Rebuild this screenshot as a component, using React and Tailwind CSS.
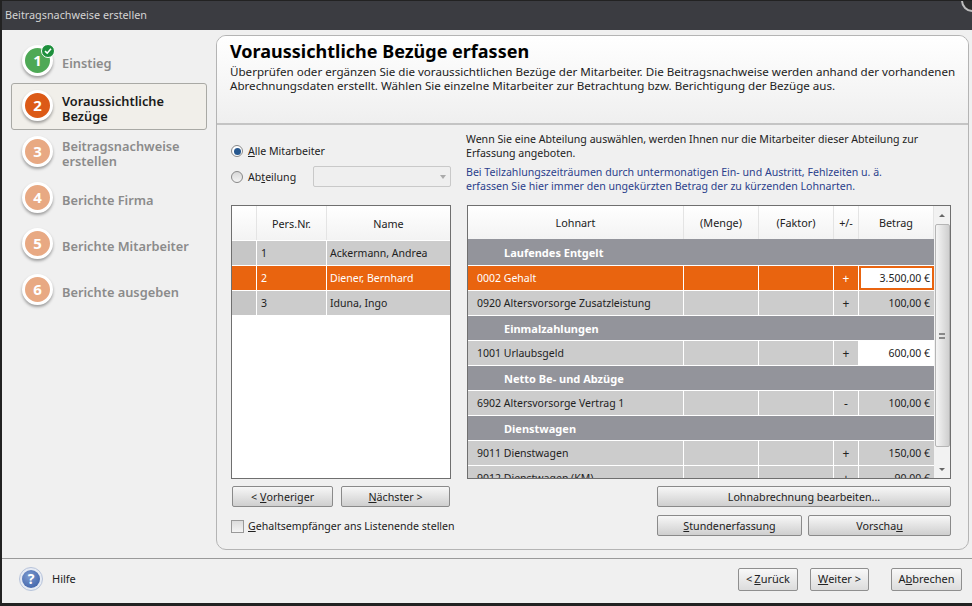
import React from 'react';

const font = "font-['Noto_Sans','DejaVu_Sans',sans-serif]";

const steps = [
  { n: 1, label: ['Einstieg'], done: true },
  { n: 2, label: ['Voraussichtliche', 'Bezüge'], active: true },
  { n: 3, label: ['Beitragsnachweise', 'erstellen'] },
  { n: 4, label: ['Berichte Firma'] },
  { n: 5, label: ['Berichte Mitarbeiter'] },
  { n: 6, label: ['Berichte ausgeben'] },
];

const people = [
  { nr: '1', name: 'Ackermann, Andrea' },
  { nr: '2', name: 'Diener, Bernhard', selected: true },
  { nr: '3', name: 'Iduna, Ingo' },
];

const rows = [
  { section: 'Laufendes Entgelt', tall: true },
  { name: '0002 Gehalt', sign: '+', value: '3.500,00 €', selected: true },
  { name: '0920 Altersvorsorge Zusatzleistung', sign: '+', value: '100,00 €' },
  { section: 'Einmalzahlungen' },
  { name: '1001 Urlaubsgeld', sign: '+', value: '600,00 €', white: true },
  { section: 'Netto Be- und Abzüge' },
  { name: '6902 Altersvorsorge Vertrag 1', sign: '-', value: '100,00 €' },
  { section: 'Dienstwagen' },
  { name: '9011 Dienstwagen', sign: '+', value: '150,00 €' },
  { name: '9012 Dienstwagen (KM)', sign: '+', value: '90,00 €' },
];

function StepCircle({ step }) {
  let color = 'bg-[#e8a983]';
  if (step.done) color = 'bg-[#4ea956]';
  if (step.active) color = 'bg-[#dc5a17]';
  return (
    <div className={`relative shrink-0 w-[31px] h-[31px] rounded-full border-[3px] border-white shadow-[0_2px_3px_rgba(0,0,0,0.35)] flex items-center justify-center text-white text-[15px] font-bold ${color}`}>
      {step.n}
      {step.done && (
        <span className="absolute -top-[4px] -right-[5px] w-[14px] h-[14px] rounded-full bg-[#1d8f3c] border border-white flex items-center justify-center">
          <svg width="8" height="8" viewBox="0 0 8 8" fill="none">
            <path d="M1 4.2 3.2 6.2 7 1.8" stroke="white" strokeWidth="1.6" />
          </svg>
        </span>
      )}
    </div>
  );
}

function Step({ step }) {
  return (
    <div className={`flex items-center gap-[9px] pl-[10px] rounded-[3px] ${step.active ? 'bg-[#f1efea] border border-[#a9a9a5] -my-px h-[47px]' : 'h-[46px] border border-transparent'}`}>
      <div className="-mt-[2px]"><StepCircle step={step} /></div>
      <div className={`mt-[4px] text-[12.8px] leading-[15px] font-semibold ${step.active ? 'text-[#1a1a1a]' : 'text-[#8b8b8b]'}`}>
        {step.label.map((l) => <div key={l}>{l}</div>)}
      </div>
    </div>
  );
}

function Btn({ className, children }) {
  return (
    <button className={`h-[21px] pt-[1px] rounded-[2px] border border-[#8a8a8a] bg-gradient-to-b from-[#f7f7f7] to-[#cfcfcf] text-[10.7px] text-[#222] flex items-center justify-center ${className}`}>
      {children}
    </button>
  );
}

function FooterBtn({ className, children }) {
  return (
    <button className={`h-[23px] rounded-[2px] border border-[#8f8f8f] bg-gradient-to-b from-[#f8f8f8] to-[#dcdcdc] text-[11px] text-[#222] flex items-center justify-center ${className}`}>
      {children}
    </button>
  );
}

function HeadCell({ className, children }) {
  return (
    <div className={`h-full pt-[2px] flex items-center justify-center border-r border-[#e4e4e4] text-[10.8px] text-[#222] ${className}`}>
      {children}
    </div>
  );
}

function WageRow({ row }) {
  if (row.section) {
    return (
      <div className={`shrink-0 pt-[2px] bg-[#93949b] border-b border-white flex items-center pl-[36px] text-[11px] font-bold text-white ${row.tall ? 'h-[27px]' : 'h-[25px]'}`}>
        {row.section}
      </div>
    );
  }
  const bg = row.selected ? 'bg-[#e9640f] text-white' : 'bg-[#cccccc] text-[#222]';
  return (
    <div className={`h-[25px] shrink-0 flex border-b border-white text-[10.5px] ${bg}`}>
      <div className="w-[216px] pt-[2px] flex items-center pl-[9px] border-r border-white">{row.name}</div>
      <div className="w-[75px] border-r border-white" />
      <div className="w-[75px] border-r border-white" />
      <div className="w-[25px] pt-[2px] flex items-center justify-center border-r border-white text-[12px]">{row.sign}</div>
      {row.selected ? (
        <div className="w-[75px] p-[2px] bg-[#e9640f]">
          <div className="h-full pt-[2px] bg-white text-[#222] flex items-center justify-end pr-[2px]">{row.value}</div>
        </div>
      ) : (
        <div className={`w-[75px] pt-[2px] flex items-center justify-end pr-[4px] ${row.white ? 'bg-white' : ''}`}>{row.value}</div>
      )}
    </div>
  );
}

function Scrollbar() {
  return (
    <div className="w-[16px] shrink-0 bg-[#f2f2f2] flex flex-col items-center">
      <div className="h-[18px] flex items-center justify-center">
        <div className="w-0 h-0 border-x-[3px] border-x-transparent border-b-[3px] border-b-[#666]" />
      </div>
      <div className="h-[223px] w-[15px] rounded-[2px] border border-[#b5b5b5] bg-gradient-to-r from-[#f5f5f5] to-[#cfcfcf] flex items-center justify-center">
        <div className="w-[6px] h-[6px] border-y-2 border-[#888] relative" />
      </div>
      <div className="pt-[21px] flex justify-center">
        <div className="w-0 h-0 border-x-[3px] border-x-transparent border-t-[3px] border-t-[#666]" />
      </div>
    </div>
  );
}

export default function App() {
  return (
    <div className={`w-[972px] h-[606px] flex flex-col overflow-hidden bg-[#f0f0f0] border-l-2 border-b-[3px] border-[#222] ${font}`}>
      <div className="relative -ml-[2px] h-[30px] shrink-0 bg-[#3b3c41] border-t border-[#222] flex items-center pl-[5px] text-[10.8px] text-[#d4d4d4] overflow-hidden">
        Beitragsnachweise erstellen
        <div className="absolute -top-[12px] -right-[12px] w-[23px] h-[23px] rounded-full border-2 border-[#bdbdbd] bg-[#2c2c2c]" />
      </div>

      <div className="flex-1 flex min-h-0 pt-[5px]">
        <div className="w-[214px] shrink-0 pt-[3px] pl-[9px] pr-[9px]">
          {steps.map((s) => <Step key={s.n} step={s} />)}
        </div>

        <div className="w-[753px] h-[515px] rounded-[10px] border border-[#b4b4b4] flex flex-col overflow-hidden">
          <div className="h-[89px] shrink-0 bg-gradient-to-b from-white to-[#efefef] border-b-2 border-[#c4c4c4] pl-[13px] pt-[4px]">
            <h1 className="text-[18px] leading-[22px] font-bold text-black">Voraussichtliche Bezüge erfassen</h1>
            <p className="mt-[3px] text-[11.6px] leading-[14px] text-[#222] whitespace-nowrap">
              Überprüfen oder ergänzen Sie die voraussichtlichen Bezüge der Mitarbeiter. Die Beitragsnachweise werden anhand der vorhandenen<br />
              Abrechnungsdaten erstellt. Wählen Sie einzelne Mitarbeiter zur Betrachtung bzw. Berichtigung der Bezüge aus.
            </p>
          </div>

          <div className="flex-1 flex pl-[14px] pt-[7px]">
            <div className="w-[220px] shrink-0 flex flex-col">
              <div className="h-[73px] text-[10.6px] text-[#222]">
                <div className="mt-[11px] h-[16px] flex items-center gap-[5px]">
                  <span className="w-[12px] h-[12px] rounded-full border border-[#888] bg-white flex items-center justify-center">
                    <span className="w-[7px] h-[7px] rounded-full bg-[#27588f]" />
                  </span>
                  <span className="pt-[2px]"><u>A</u>lle Mitarbeiter</span>
                </div>
                <div className="mt-[7px] flex items-center">
                  <span className="w-[12px] h-[12px] rounded-full border border-[#888] bg-gradient-to-b from-[#d8d8d8] to-[#f4f4f4] mr-[5px]" />
                  <span className="w-[65px] pt-[2px]">Ab<u>t</u>eilung</span>
                  <div className="w-[138px] h-[21px] rounded-[2px] border border-[#c9c9c9] bg-[#efefef] flex items-center justify-end pr-[4px]">
                    <div className="w-0 h-0 border-x-[3px] border-x-transparent border-t-[4px] border-t-[#aaa]" />
                  </div>
                </div>
              </div>

              <div className="h-[274px] border border-[#6f6f6f] bg-white flex flex-col">
                <div className="h-[35px] flex bg-gradient-to-b from-white to-[#f3f3f3] border-b border-white">
                  <HeadCell className="w-[25px]" />
                  <HeadCell className="w-[70px]">Pers.Nr.</HeadCell>
                  <HeadCell className="flex-1 border-r-0">Name</HeadCell>
                </div>
                {people.map((p) => (
                  <div key={p.nr} className={`h-[25px] flex border-b border-white text-[10.5px] ${p.selected ? 'bg-[#e9640f] text-white' : 'bg-[#cccccc] text-[#222]'}`}>
                    <div className={`w-[25px] border-r border-white ${p.selected ? '' : 'bg-[#c6c6c6]'}`} />
                    <div className="w-[70px] pt-[2px] flex items-center pl-[4px] border-r border-white">{p.nr}</div>
                    <div className="flex-1 pt-[2px] flex items-center pl-[3px]">{p.name}</div>
                  </div>
                ))}
              </div>

              <div className="mt-[7px] flex gap-[8px] pl-px">
                <Btn className="w-[101px]">&lt; <u className="ml-[3px]">V</u>orheriger</Btn>
                <Btn className="w-[109px]"><u>N</u>ächster &gt;</Btn>
              </div>
              <div className="mt-[12px] flex items-center gap-[4px] text-[10.6px] text-[#222] whitespace-nowrap">
                <span className="shrink-0 w-[13px] h-[13px] border border-[#999] bg-gradient-to-b from-[#dcdcdc] to-[#f4f4f4]" />
                <span><u>G</u>ehaltsempfänger ans Listenende stellen</span>
              </div>
            </div>

            <div className="w-[484px] ml-[16px] flex flex-col">
              <div className="h-[73px] -ml-[1px] text-[10.6px] leading-[14px] whitespace-nowrap">
                <p className="text-[#222]">Wenn Sie eine Abteilung auswählen, werden Ihnen nur die Mitarbeiter dieser Abteilung zur<br />Erfassung angeboten.</p>
                <p className="mt-[5px] text-[#2b3f8c]">Bei Teilzahlungszeiträumen durch untermonatigen Ein- und Austritt, Fehlzeiten u. ä.<br />erfassen Sie hier immer den ungekürzten Betrag der zu kürzenden Lohnarten.</p>
              </div>

              <div className="h-[274px] border border-[#6f6f6f] flex bg-white">
                <div className="w-[466px] flex flex-col overflow-hidden">
                  <div className="h-[33px] shrink-0 flex bg-gradient-to-b from-white to-[#f3f3f3]">
                    <HeadCell className="w-[216px]">Lohnart</HeadCell>
                    <HeadCell className="w-[75px]">(Menge)</HeadCell>
                    <HeadCell className="w-[75px]">(Faktor)</HeadCell>
                    <HeadCell className="w-[25px]">+/-</HeadCell>
                    <HeadCell className="w-[75px]">Betrag</HeadCell>
                  </div>
                  {rows.map((r, i) => <WageRow key={i} row={r} />)}
                </div>
                <Scrollbar />
              </div>

              <div className="mt-[7px] flex justify-end">
                <Btn className="w-[294px]">Lohnabrechnung bearbeiten...</Btn>
              </div>
              <div className="mt-[8px] flex justify-end gap-[6px]">
                <Btn className="w-[145px]"><u>S</u>tundenerfassung</Btn>
                <Btn className="w-[143px]">Vorscha<u>u</u></Btn>
              </div>
            </div>
          </div>
        </div>
      </div>

      <div className="h-[45px] shrink-0 border-t border-[#9a9a9a] flex items-center pl-[17px] pr-[10px] pb-[4px] text-[11px] text-[#222]">
        <svg width="24" height="24" viewBox="0 0 24 24" className="mr-[9px]">
          <defs>
            <radialGradient id="help" cx="0.4" cy="0.35" r="0.8">
              <stop offset="0" stopColor="#7d9bd0" />
              <stop offset="1" stopColor="#3a5ea6" />
            </radialGradient>
          </defs>
          <circle cx="12" cy="12" r="11.5" fill="#e6ebf4" stroke="#b7c3da" />
          <circle cx="12" cy="12" r="9" fill="url(#help)" />
          <text x="12" y="17" textAnchor="middle" fontSize="14" fontWeight="700" fill="white">?</text>
        </svg>
        Hilfe
        <FooterBtn className="ml-auto w-[60px]">&lt; <u className="ml-[2px]">Z</u>urück</FooterBtn>
        <FooterBtn className="ml-[12px] w-[59px]"><u>W</u>eiter &gt;</FooterBtn>
        <FooterBtn className="ml-[22px] w-[71px]">A<u>b</u>brechen</FooterBtn>
      </div>
    </div>
  );
}
